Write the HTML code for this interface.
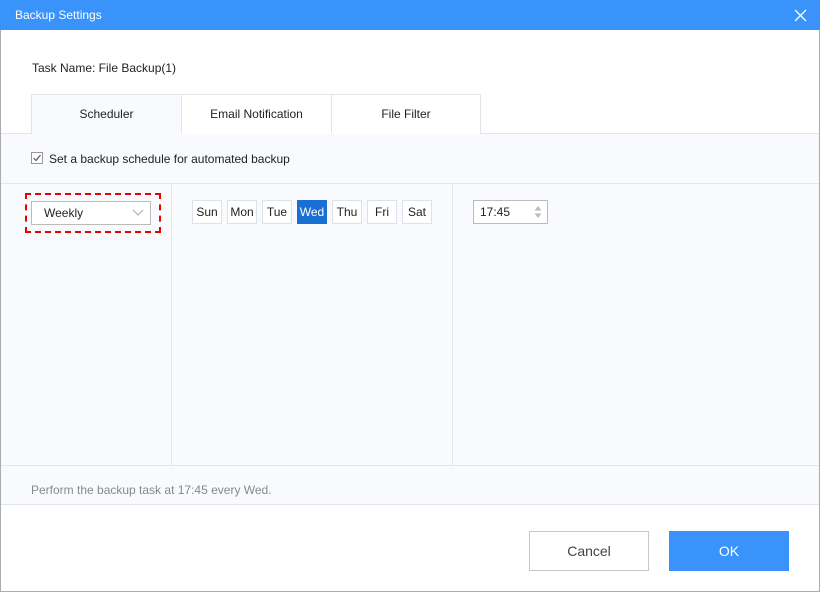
<!DOCTYPE html>
<html><head><style>
*{margin:0;padding:0;box-sizing:border-box}
body{width:820px;height:592px;position:relative;font-family:"Liberation Sans",sans-serif;font-size:12px;color:#222;background:#fff;overflow:hidden}
.a{position:absolute}
.day{position:absolute;top:200px;width:30px;height:24px;border:1px solid #dde2ea;background:#fff;text-align:center;line-height:22px;font-size:12px}
</style></head><body>
<div class="a" style="left:0;top:0;width:820px;height:30px;background:#3a93fb"></div>
<div class="a" style="left:15px;top:8px;color:#fff;font-size:12px">Backup Settings</div>
<svg class="a" style="left:794px;top:9px" width="13" height="13"><path d="M1 1L12 12M12 1L1 12" stroke="#fff" stroke-width="1.3"/></svg>
<div class="a" style="left:0;top:30px;width:820px;height:562px;border:1px solid #a9acb0;border-top:none"></div>
<div class="a" style="left:32px;top:61px">Task Name: File Backup(1)</div>
<div class="a" style="left:1px;top:133px;width:818px;height:372px;background:#f8fafd;border-top:1px solid #e2e6ec;border-bottom:1px solid #e2e6ec"></div>
<div class="a" style="left:31px;top:94px;width:450px;height:40px;border:1px solid #e2e6ec;border-bottom:none;background:#fff"></div>
<div class="a" style="left:32px;top:95px;width:149px;height:40px;background:#f8fafd;text-align:center;line-height:38px">Scheduler</div>
<div class="a" style="left:181px;top:94px;width:1px;height:39px;background:#e2e6ec"></div>
<div class="a" style="left:331px;top:94px;width:1px;height:39px;background:#e2e6ec"></div>
<div class="a" style="left:182px;top:95px;width:149px;text-align:center;line-height:38px">Email Notification</div>
<div class="a" style="left:332px;top:95px;width:148px;text-align:center;line-height:38px">File Filter</div>
<div class="a" style="left:31px;top:152px;width:12px;height:12px;border:1px solid #999;background:#fff"></div>
<svg class="a" style="left:32px;top:153px" width="10" height="10"><path d="M1.5 5L4 7.5L8.5 2" stroke="#555" stroke-width="1.2" fill="none"/></svg>
<div class="a" style="left:49px;top:152px">Set a backup schedule for automated backup</div>
<div class="a" style="left:1px;top:183px;width:818px;height:1px;background:#e2e6ec"></div>
<div class="a" style="left:1px;top:465px;width:818px;height:1px;background:#e2e6ec"></div>
<div class="a" style="left:171px;top:184px;width:1px;height:281px;background:#e2e6ec"></div>
<div class="a" style="left:452px;top:184px;width:1px;height:281px;background:#e2e6ec"></div>
<div class="a" style="left:25px;top:193px;width:136px;height:40px;border:2px dashed #e00"></div>
<div class="a" style="left:31px;top:201px;width:120px;height:24px;border:1px solid #bbb;background:#fff;padding-left:12px;line-height:22px">Weekly</div>
<svg class="a" style="left:132px;top:209px" width="12" height="8"><path d="M1 1L6 6L11 1" stroke="#aaa" fill="none"/></svg>
<div class="day" style="left:192px">Sun</div>
<div class="day" style="left:227px">Mon</div>
<div class="day" style="left:262px">Tue</div>
<div class="day" style="left:297px;background:#1a6fd4;border-color:#1a6fd4;color:#fff">Wed</div>
<div class="day" style="left:332px">Thu</div>
<div class="day" style="left:367px">Fri</div>
<div class="day" style="left:402px">Sat</div>
<div class="a" style="left:473px;top:200px;width:75px;height:24px;border:1px solid #bbb;background:#fff;padding-left:6px;line-height:22px">17:45</div>
<svg class="a" style="left:534px;top:206px" width="8" height="12"><path d="M4 0L7.5 4.5H0.5Z M4 12L7.5 7.5H0.5Z" fill="#bbb"/></svg>
<div class="a" style="left:31px;top:483px;color:#888">Perform the backup task at 17:45 every Wed.</div>
<div class="a" style="left:529px;top:531px;width:120px;height:40px;border:1px solid #c5c8cc;background:#fff;text-align:center;line-height:38px;font-size:14px;color:#444">Cancel</div>
<div class="a" style="left:669px;top:531px;width:120px;height:40px;background:#3a93fb;text-align:center;line-height:40px;font-size:14px;color:#fff">OK</div>
</body></html>
